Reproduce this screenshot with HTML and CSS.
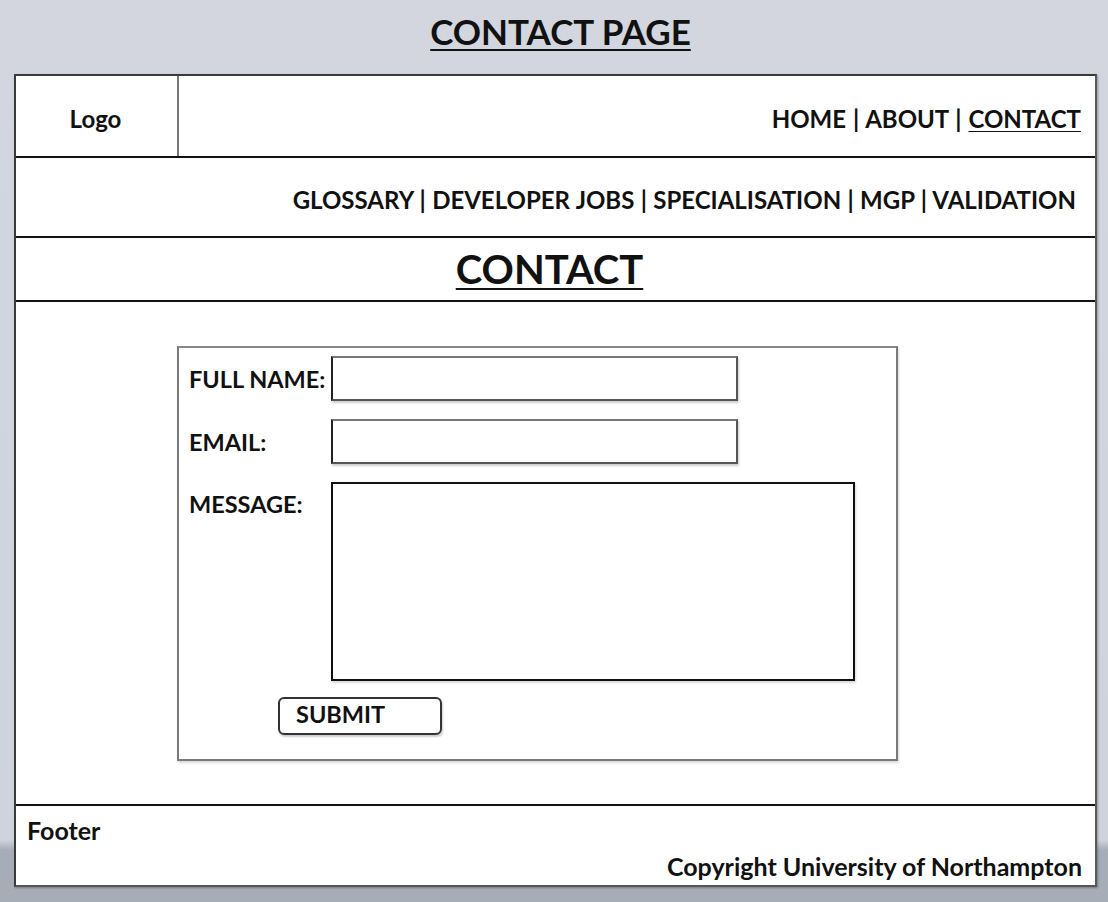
FILE: index.html
```html
<!DOCTYPE html>
<html>
<head>
<meta charset="utf-8">
<link rel="stylesheet" href="styles.css">
</head>
<body>
<h1 class="page-title">CONTACT PAGE</h1>
<div class="frame">
  <div class="row-top">
    <div class="logo">Logo</div>
    <nav class="nav1">HOME | ABOUT | <span class="u">CONTACT</span></nav>
  </div>
  <div class="row-nav2">
    <nav class="nav2">GLOSSARY | DEVELOPER JOBS | SPECIALISATION | MGP | VALIDATION</nav>
  </div>
  <div class="row-head"><h2 class="heading">CONTACT</h2></div>
  <div class="content">
    <div class="form">
      <div class="field">
        <span class="label">FULL NAME:</span>
        <div class="input"></div>
      </div>
      <div class="field">
        <span class="label">EMAIL:</span>
        <div class="input"></div>
      </div>
      <div class="field msg">
        <span class="label">MESSAGE:</span>
        <div class="textarea"></div>
      </div>
      <div class="submit">SUBMIT</div>
    </div>
  </div>
  <div class="footer">
    <div class="foot-left">Footer</div>
    <div class="foot-right">Copyright University of Northampton</div>
  </div>
</div>
</body>
</html>
```
FILE: styles.css
```css
html, body {
  margin: 0;
  padding: 0;
}
body {
  width: 1108px;
  height: 902px;
  overflow: hidden;
  background: linear-gradient(#d3d6de 0, #cfd3db 840px, #a7adb7 850px, #a7adb7 902px);
  font-family: Lato, "Open Sans", sans-serif;
  font-weight: 700;
  color: #111;
  padding-top: 12px;
  box-sizing: border-box;
}
.page-title {
  margin: 0;
  height: 62px;
  text-align: center;
  font-size: 35px;
  line-height: 38px;
  text-decoration: underline;
  text-decoration-thickness: 2px;
  text-underline-offset: 4px;
  color: #111;
  padding-left: 13px;
}
.frame {
  margin-left: 14px;
  width: 1083px;
  height: 813px;
  box-sizing: border-box;
  border: 2px solid #3a3a3a;
  border-right-color: #5a5a5a;
  border-bottom-color: #555;
  background: #fff;
  display: flex;
  flex-direction: column;
  box-shadow: 1px 1px 2px rgba(0,0,0,0.3);
}
.row-top {
  display: flex;
  height: 82px;
  box-sizing: border-box;
  border-bottom: 2px solid #111;
}
.logo {
  width: 163px;
  border-right: 2px solid #777;
  display: flex;
  align-items: center;
  justify-content: center;
  font-size: 24px;
  padding-top: 5px;
  padding-right: 2px;
  box-sizing: border-box;
}
.nav1 {
  flex: 1;
  display: flex;
  align-items: center;
  justify-content: flex-end;
  padding-right: 14px;
  padding-top: 5px;
  font-size: 24px;
  white-space: pre;
  word-spacing: 1px;
}
.u {
  text-decoration: underline;
  text-decoration-thickness: 1px;
  text-underline-offset: 3px;
}
.row-nav2 {
  height: 80px;
  box-sizing: border-box;
  border-bottom: 2px solid #111;
  display: flex;
  align-items: center;
  justify-content: flex-end;
  padding-right: 19px;
  padding-top: 4px;
}
.nav2 {
  font-size: 24px;
  white-space: pre;
  word-spacing: 0.5px;
}
.row-head {
  height: 64px;
  box-sizing: border-box;
  border-bottom: 2px solid #111;
  display: flex;
  align-items: center;
  justify-content: center;
  padding-right: 12px;
}
.heading {
  margin: 0;
  font-size: 40px;
  line-height: 44px;
  text-decoration: underline;
  text-decoration-thickness: 2px;
  text-underline-offset: 4px;
}
.content {
  height: 504px;
  box-sizing: border-box;
  border-bottom: 2px solid #111;
  padding-top: 44px;
  padding-left: 161px;
}
.form {
  width: 721px;
  height: 415px;
  box-sizing: border-box;
  border: 2px solid #7a7a7a;
  border-top-color: #888;
  box-shadow: 1px 2px 2px rgba(0,0,0,0.15);
  padding: 8px 0 0 10px;
  display: flex;
  flex-direction: column;
}
.field {
  display: flex;
  align-items: center;
  margin-bottom: 18px;
}
.label {
  width: 142px;
  font-size: 23.5px;
}
.input {
  width: 407px;
  height: 45px;
  box-sizing: border-box;
  border: 2px solid #222;
  border-top-color: #777;
  border-right-color: #555;
  border-bottom-color: #555;
  box-shadow: 1px 2px 2px rgba(0,0,0,0.2);
}
.field.msg {
  align-items: flex-start;
  margin-bottom: 16px;
}
.field.msg .label {
  padding-top: 8px;
}
.textarea {
  width: 524px;
  height: 199px;
  box-sizing: border-box;
  border: 2px solid #111;
  box-shadow: 1px 2px 2px rgba(0,0,0,0.15);
}
.submit {
  margin-left: 89px;
  width: 164px;
  height: 38px;
  box-sizing: border-box;
  border: 2px solid #333;
  border-radius: 6px;
  box-shadow: 1px 2px 2px rgba(0,0,0,0.2);
  font-size: 23.5px;
  padding-left: 16px;
  line-height: 30px;
}
.footer {
  flex: 1;
  display: flex;
  flex-direction: column;
  padding: 12px 13px 0 11px;
  font-size: 25px;
}
.foot-left {
  line-height: 24px;
}
.foot-right {
  margin-top: 12px;
  text-align: right;
  line-height: 24px;
}
```
